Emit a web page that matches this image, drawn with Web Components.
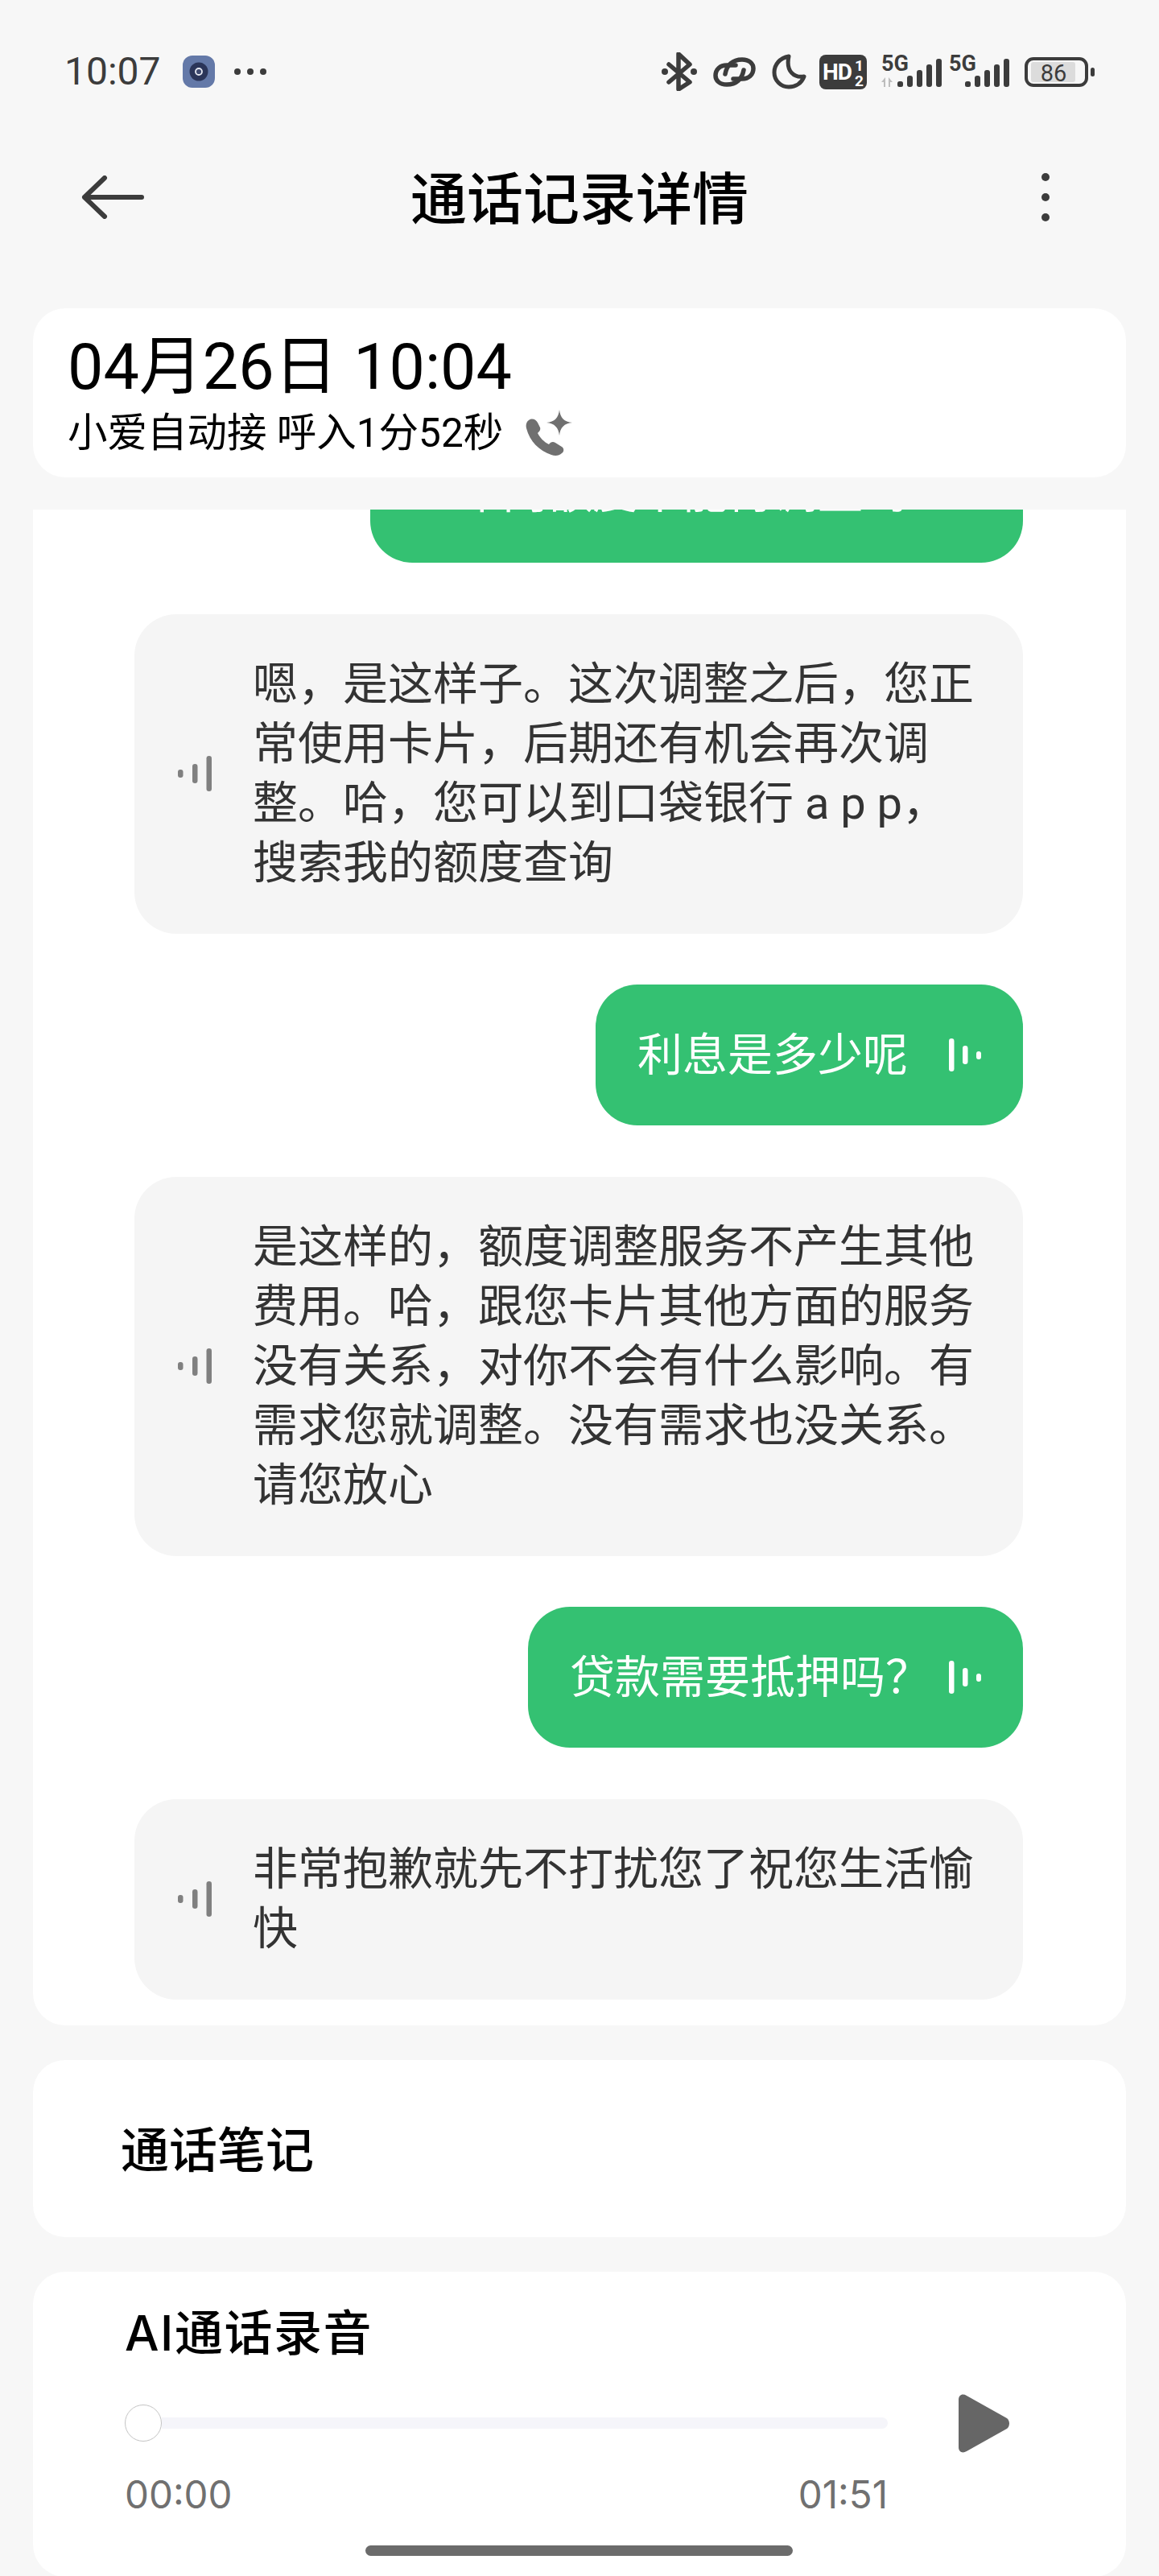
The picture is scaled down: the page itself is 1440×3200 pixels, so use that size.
<!DOCTYPE html>
<html lang="zh-CN">
<head>
<meta charset="utf-8">
<title>通话记录详情</title>
<style>
    html, body { margin: 0; height: 3200px; overflow: hidden; background: #f7f7f7; }
    body { position: relative; font-family: Roboto, "Noto Sans CJK SC", sans-serif; }
</style>
</head>
<body>
<status-bar></status-bar>
<app-bar>通话记录详情</app-bar>
<call-header date="04月26日 10:04" info="小爱自动接 呼入1分52秒"></call-header>
<chat-card>
    <chat-bubble mine style="margin-top:-109px">一年内额度不能再调整吗</chat-bubble>
    <chat-bubble>嗯，是这样子。这次调整之后，您正常使用卡片，后期还有机会再次调整。哈，您可以到口袋银行 a p p，搜索我的额度查询</chat-bubble>
    <chat-bubble mine>利息是多少呢</chat-bubble>
    <chat-bubble>是这样的，额度调整服务不产生其他费用。哈，跟您卡片其他方面的服务没有关系，对你不会有什么影响。有需求您就调整。没有需求也没关系。请您放心</chat-bubble>
    <chat-bubble mine>贷款需要抵押吗<span style="letter-spacing:-28px">？</span></chat-bubble>
    <chat-bubble>非常抱歉就先不打扰您了祝您生活愉快</chat-bubble>
</chat-card>
<note-card>通话笔记</note-card>
<audio-card title-text="AI通话录音" start="00:00" end="01:51"></audio-card>
<home-indicator></home-indicator>

<script>
class StatusBar extends HTMLElement {
    constructor() {
        super();
        this.attachShadow({ mode: 'open' });
    }

    signal(withArrows) {
        return `
            <svg class="signal" width="75" height="48" viewBox="0 -8 75 48">
                <text x="0" y="19" font-family="Roboto" font-weight="700" font-size="27" fill="#3c3c3c">5G</text>
                ${withArrows ? '<path d="M0 33l5-6v12h-2v-6zM14 33l-5-6v12h2v-6z" fill="#bdbdbd"/>' : ''}
                <rect x="20" y="32" width="7" height="7" rx="2.5" fill="#3c3c3c"/>
                <rect x="32" y="25" width="7" height="14" rx="3" fill="#3c3c3c"/>
                <rect x="44" y="18" width="7" height="21" rx="3" fill="#3c3c3c"/>
                <rect x="56" y="11" width="7" height="28" rx="3" fill="#3c3c3c"/>
                <rect x="68" y="4" width="7" height="35" rx="3" fill="#3c3c3c"/>
            </svg>`;
    }

    connectedCallback() {
        this.shadowRoot.innerHTML = `
            <style>
                :host { display: flex; justify-content: space-between; align-items: center; height: 178px; padding: 0 80px 0 80px; color: #3c3c3c; }
                .left, .right { display: flex; align-items: center; }
                .time { font: 400 48px/1 Roboto, sans-serif; width: 147px; }
                .dots { margin-left: 24px; display: flex; gap: 8px; }
                .dots i { width: 8px; height: 8px; border-radius: 50%; background: #3c3c3c; }
                svg { display: block; flex: none; }
                .signal { margin-top: -8px; }
            </style>
            <div class="left">
                <span class="time">10:07</span>
                <svg width="40" height="40" viewBox="0 0 40 40">
                    <rect width="40" height="40" rx="12" fill="#6479a8"/>
                    <circle cx="20" cy="20" r="11.5" fill="#2b3559"/>
                    <circle cx="20" cy="20" r="4" fill="#3f4a70" stroke="#e6e9f2" stroke-width="1.8"/>
                </svg>
                <div class="dots"><i></i><i></i><i></i></div>
            </div>
            <div class="right">
                <svg width="44" height="48" viewBox="0 0 44 48" style="margin-right:20px">
                    <path d="M9 15L35 37L21 46V2L35 15L9 37" fill="none" stroke="#3c3c3c" stroke-width="5.5" stroke-linecap="round" stroke-linejoin="round"/>
                    <circle cx="4" cy="24" r="4" fill="#3c3c3c"/><circle cx="40" cy="24" r="4" fill="#3c3c3c"/>
                </svg>
                <svg width="54" height="39" viewBox="0 0 54 39" style="margin-right:19px">
                    <g fill="none" stroke="#3c3c3c" stroke-width="5.5" stroke-linecap="round">
                        <path d="M15 22C17 11 24 4 36 4C45 4 50 9 50 15C50 23 44 28 36 28H25"/>
                        <path d="M38 17C36 28 29 35 17 35C8 35 3 30 3 24C3 16 9 11 17 11H28"/>
                    </g>
                </svg>
                <svg width="43" height="44" viewBox="0 0 43 44" style="margin-right:16px">
                    <path d="M21 3C10 5 3 13 3 23C3 33 11 41 21 41C30 41 37 36 40 28C28 30 17 22 21 3Z" fill="none" stroke="#3c3c3c" stroke-width="5" stroke-linejoin="round"/>
                </svg>
                <svg width="59" height="43" viewBox="0 0 59 43" style="margin-right:18px">
                    <rect width="59" height="43" rx="8" fill="#3c3c3c"/>
                    <text x="4" y="31" font-family="Roboto" font-weight="700" font-size="28" letter-spacing="-1" fill="#fff">HD</text>
                    <text x="44" y="20" font-family="Roboto" font-weight="700" font-size="19" fill="#fff">1</text>
                    <text x="44" y="39" font-family="Roboto" font-weight="700" font-size="19" fill="#fff">2</text>
                </svg>
                <span style="margin-right:9px">${this.signal(true)}</span>
                <span style="margin-right:19px">${this.signal(false)}</span>
                <svg width="87" height="37" viewBox="0 0 87 37">
                    <rect x="2" y="2" width="75" height="33" rx="9" fill="none" stroke="#3c3c3c" stroke-width="4"/>
                    <rect x="8" y="6" width="55" height="25" rx="3" fill="#dcdcdc"/>
                    <text x="36" y="29.5" text-anchor="middle" font-family="Roboto" font-size="29" fill="#3c3c3c">86</text>
                    <rect x="82" y="13" width="5" height="11" rx="2.5" fill="#3c3c3c"/>
                </svg>
            </div>
        `;
    }
}

class AppBar extends HTMLElement {
    constructor() {
        super();
        this.attachShadow({ mode: 'open' });
    }

    connectedCallback() {
        this.shadowRoot.innerHTML = `
            <style>
                :host { display: grid; grid-template-columns: 1fr auto 1fr; align-items: center; height: 134px; padding: 0 101px; }
                .title { font: 500 70px/1 "Noto Sans CJK SC", sans-serif; color: #000; margin-bottom: 4px; }
                svg { display: block; }
                .more { justify-self: end; margin-right: 35px; }
            </style>
            <svg width="78" height="54" viewBox="0 0 78 54">
                <path d="M75 27H4M29 3L4 27L29 51" fill="none" stroke="#3c3c3c" stroke-width="6" stroke-linecap="round" stroke-linejoin="round"/>
            </svg>
            <span class="title"><slot></slot></span>
            <svg class="more" width="10" height="60" viewBox="0 0 10 60">
                <circle cx="5" cy="5" r="5" fill="#3c3c3c"/><circle cx="5" cy="30" r="5" fill="#3c3c3c"/><circle cx="5" cy="55" r="5" fill="#3c3c3c"/>
            </svg>
        `;
    }
}

class CallHeader extends HTMLElement {
    constructor() {
        super();
        this.attachShadow({ mode: 'open' });
    }

    connectedCallback() {
        this.shadowRoot.innerHTML = `
            <style>
                :host { display: block; height: 210px; box-sizing: border-box; margin: 71px 41px 40px; padding: 28px 43px 0; background: #fff; border-radius: 40px; color: #000; font-family: Roboto, "Noto Sans CJK SC", sans-serif; }
                .date { font-size: 79px; line-height: 90px; font-weight: 400; }
                .info { display: flex; align-items: center; font-size: 49.5px; line-height: 66px; margin-top: 4px; }
                svg { margin-left: 27px; filter: blur(.5px); }
            </style>
            <div class="date">${this.getAttribute('date')}</div>
            <div class="info">
                <span>${this.getAttribute('info')}</span>
                <svg width="60" height="60" viewBox="0 0 60 60" fill="#707070">
                    <path d="M5 14C9 11 14 13 16 17L19 23C20 26 18 28 16 30C19 36 24 41 30 44C32 41 35 40 38 42L46 47C49 49 49 53 46 55C43 58 38 59 33 57C18 52 6 40 2 24C1 20 2 16 5 14Z"/>
                    <path d="M43 1C44 11 49 16 59 17C49 18 44 23 43 33C42 23 37 18 27 17C37 16 42 11 43 1Z"/>
                </svg>
            </div>
        `;
    }
}

class ChatCard extends HTMLElement {
    constructor() {
        super();
        this.attachShadow({ mode: 'open' });
    }

    connectedCallback() {
        this.shadowRoot.innerHTML = `
            <style>
                :host { display: flex; flex-direction: column; gap: 63.5px; margin: 0 41px 43px; padding: 0 128px 32px 126px; background: #fff; border-radius: 0 0 40px 40px; overflow: hidden; }
            </style>
            <slot></slot>
        `;
    }
}

class ChatBubble extends HTMLElement {
    constructor() {
        super();
        this.attachShadow({ mode: 'open' });
    }

    connectedCallback() {
        const mine = this.hasAttribute('mine');
        const wave = mine
            ? `<svg width="40" height="42" viewBox="0 0 40 42" fill="#fff">
                   <rect x="0" y="0" width="6.5" height="41" rx="3.2"/><rect x="17" y="9" width="6.5" height="23" rx="3.2"/><rect x="34" y="16" width="6" height="10" rx="3"/>
               </svg>`
            : `<svg width="42" height="44" viewBox="0 0 42 44" fill="#808080">
                   <rect x="0" y="17" width="6.5" height="10" rx="3"/><rect x="18" y="10" width="6.5" height="24" rx="3.2"/><rect x="35.5" y="0" width="6.5" height="44" rx="3.2"/>
               </svg>`;
        this.shadowRoot.innerHTML = `
            <style>
                :host { display: flex; flex: none; justify-content: ${mine ? 'flex-end' : 'flex-start'}; }
                .bubble { display: flex; align-items: center; box-sizing: border-box; border-radius: 52px; font-family: Roboto, "Noto Sans CJK SC", sans-serif; font-size: 56px; line-height: 74px; padding-top: 50.5px; padding-bottom: 50.5px; }
                .mine { padding-left: 52px; padding-right: 52px; gap: 51px; background: #34c172; color: #fff; }
                .other { width: 1104px; padding-left: 54px; padding-right: 50px; gap: 51px; background: #f5f5f5; color: #333; }
                svg { display: block; flex: none; }
            </style>
            <div class="bubble ${mine ? 'mine' : 'other'}">
                ${mine ? '' : wave}
                <span><slot></slot></span>
                ${mine ? wave : ''}
            </div>
        `;
    }
}

class NoteCard extends HTMLElement {
    constructor() {
        super();
        this.attachShadow({ mode: 'open' });
    }

    connectedCallback() {
        this.shadowRoot.innerHTML = `
            <style>
                :host { display: flex; align-items: center; box-sizing: border-box; height: 220px; margin: 0 41px 43px; padding: 0 0 4px 109px; background: #fff; border-radius: 40px; color: #000; font: 500 60px/1 "Noto Sans CJK SC", sans-serif; }
            </style>
            <slot></slot>
        `;
    }
}

class AudioCard extends HTMLElement {
    constructor() {
        super();
        this.attachShadow({ mode: 'open' });
    }

    connectedCallback() {
        this.shadowRoot.innerHTML = `
            <style>
                :host { display: block; box-sizing: border-box; height: 379px; margin: 0 41px; padding: 36px 0 0 114px; background: #fff; border-radius: 40px; font-family: Inter, "Noto Sans CJK SC", sans-serif; }
                .title { font-size: 60px; line-height: 80px; font-weight: 500; color: #000; letter-spacing: 1.5px; }
                .row { display: flex; align-items: center; height: 73px; margin-top: 36px; }
                .slider { display: flex; align-items: center; width: 948px; }
                .thumb { width: 46px; height: 46px; box-sizing: border-box; border: 1px solid #c4c4c4; border-radius: 50%; background: #fff; flex: none; }
                .track { flex: 1; height: 14px; background: #f5f5fa; border-radius: 0 7px 7px 0; }
                svg { margin-left: 88px; display: block; }
                .times { display: flex; justify-content: space-between; width: 948px; margin-top: 27px; font-size: 47.5px; line-height: 50px; color: #707070; }
            </style>
            <div class="title">${this.getAttribute('title-text')}</div>
            <div class="row">
                <div class="slider"><div class="thumb"></div><div class="track"></div></div>
                <svg width="64" height="73" viewBox="0 0 64 73">
                    <path d="M0 7C0 1 5-1 10 2L60 30C64 33 64 40 60 43L10 71C5 74 0 72 0 66Z" fill="#666"/>
                </svg>
            </div>
            <div class="times"><span>${this.getAttribute('start')}</span><span>${this.getAttribute('end')}</span></div>
        `;
    }
}

class HomeIndicator extends HTMLElement {
    constructor() {
        super();
        this.attachShadow({ mode: 'open' });
    }

    connectedCallback() {
        this.shadowRoot.innerHTML = `
            <style>
                :host { position: absolute; left: 454px; top: 3162px; width: 531px; height: 13px; border-radius: 7px; background: #6b6b6b; }
            </style>
        `;
    }
}

customElements.define('status-bar', StatusBar);
customElements.define('app-bar', AppBar);
customElements.define('call-header', CallHeader);
customElements.define('chat-card', ChatCard);
customElements.define('chat-bubble', ChatBubble);
customElements.define('note-card', NoteCard);
customElements.define('audio-card', AudioCard);
customElements.define('home-indicator', HomeIndicator);
</script>
</body>
</html>
